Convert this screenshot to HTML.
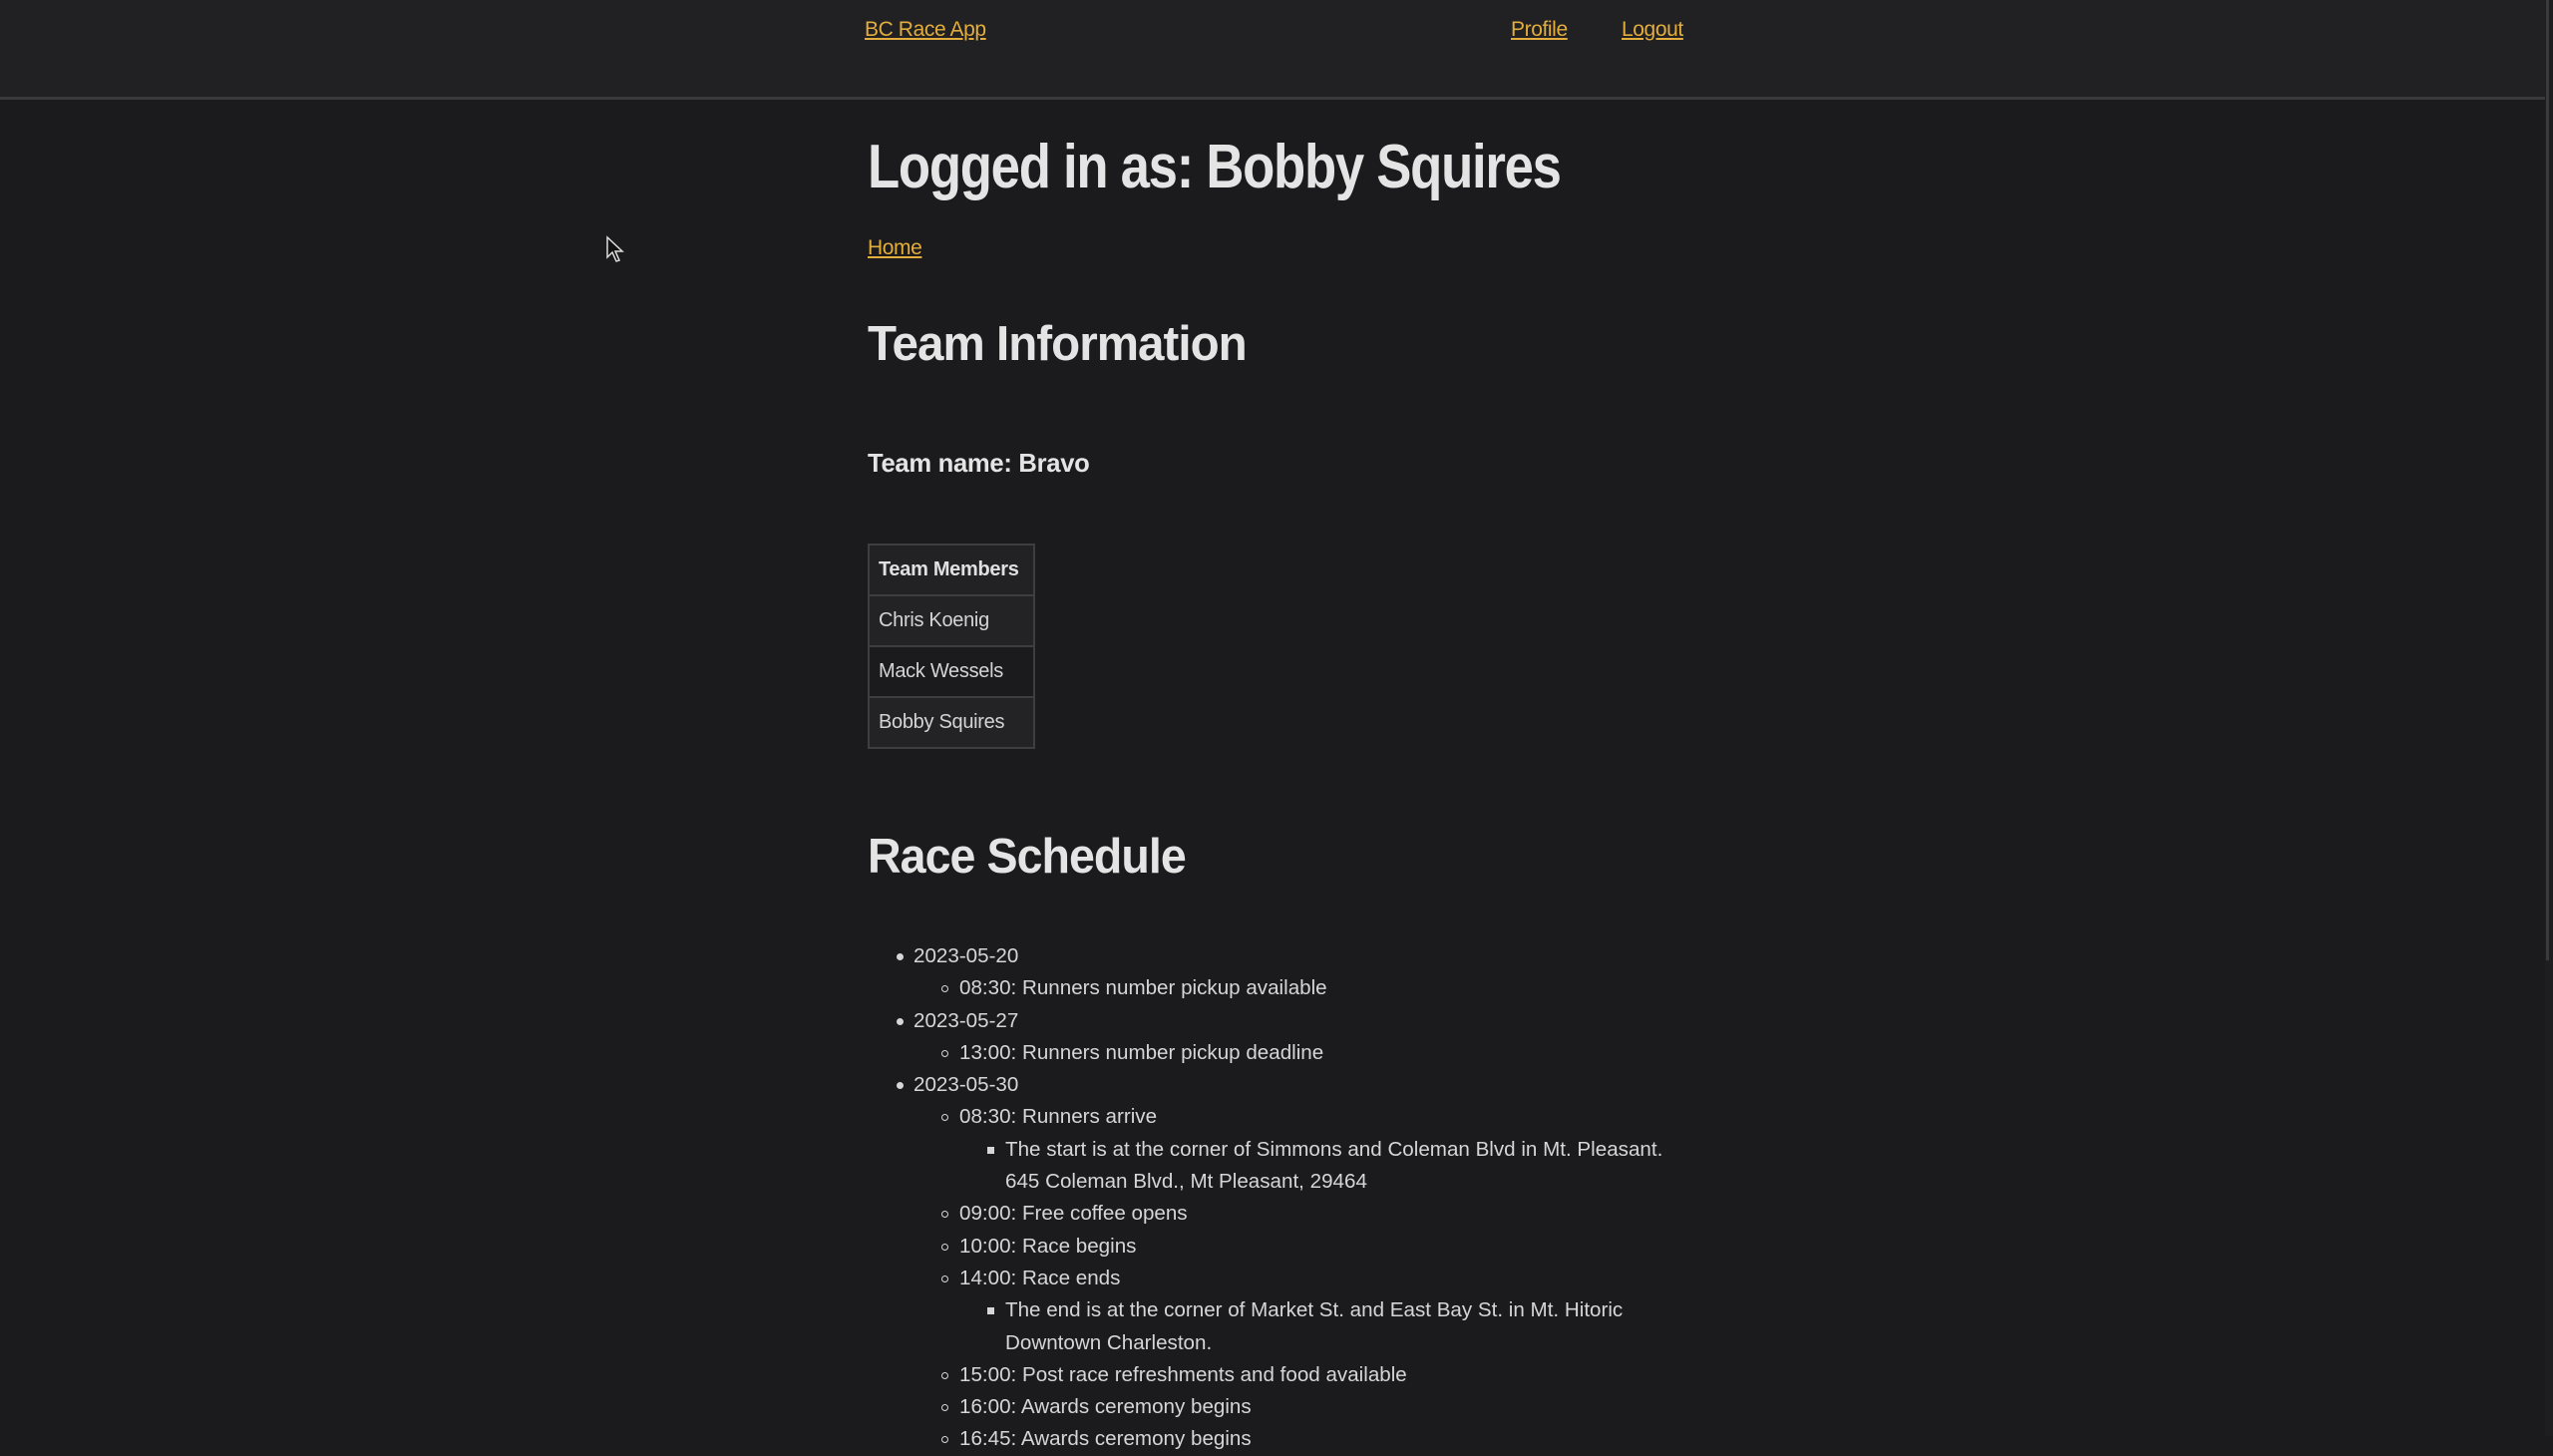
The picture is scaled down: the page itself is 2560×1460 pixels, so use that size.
<!DOCTYPE html>
<html><head><meta charset="utf-8">
<style>
html,body{margin:0;padding:0;}
body{width:2560px;height:1440px;overflow:hidden;background:#1b1b1d;font-family:"Liberation Sans",Arial,sans-serif;color:#d4d4d4;position:relative;}
.hdr{position:absolute;left:0;top:0;width:2552px;height:97px;background:#212124;border-bottom:3px solid #3a3a3d;}
a{color:#e2ad3c;text-decoration:underline;}
.nav{position:absolute;top:18px;font-size:21px;letter-spacing:-0.4px;}
.sb{position:absolute;left:2552px;top:0;width:8px;height:1440px;background:#1e1e20;}
.sbt{position:absolute;left:2553px;top:0;width:3px;height:963px;background:#3a3a3d;}
.c{position:absolute;left:870px;}
h1,h2,h3{margin:0;color:#e4e4e4;font-weight:bold;transform-origin:0 0;white-space:nowrap;}
h1{font-size:60px;letter-spacing:-1.5px;line-height:1;transform:scaleX(0.85);}
h2{font-size:49px;letter-spacing:-1px;line-height:1;}
h3{font-size:26px;letter-spacing:-0.3px;line-height:1;}
table{border-collapse:collapse;font-size:20px;letter-spacing:-0.3px;}
td,th{border:2px solid #3e3e41;padding:0 9px;height:49px;text-align:left;width:146px;}
th{background:#222225;color:#e0e0e0;}
tr.a td{background:#232326;}
tr.b td{background:#1b1b1d;}
ul{margin:0;padding:0;list-style:none;font-size:20.6px;letter-spacing:0;line-height:32.3px;color:#d6d6d6;}
li{position:relative;}
li.l1{padding-left:46px;}
.l1:before{content:"";position:absolute;left:29px;top:13px;width:7px;height:7px;border-radius:50%;background:#d6d6d6;}
.l2{padding-left:92px;}
.l2:before{content:"";position:absolute;left:74px;top:13px;width:5px;height:5px;border-radius:50%;border:1.5px solid #d6d6d6;}
.l3{padding-left:138px;}
.l3:before{content:"";position:absolute;left:120px;top:13px;width:7px;height:7px;background:#d6d6d6;}
</style></head><body>
<div class="hdr">
<a class="nav" style="left:867px" href="#">BC Race App</a>
<a class="nav" style="left:1515px" href="#">Profile</a>
<a class="nav" style="left:1626px" href="#">Logout</a>
</div>
<div class="sb"></div><div class="sbt"></div>
<svg style="position:absolute;left:607px;top:236px" width="20" height="28" viewBox="0 0 20 28"><path d="M2 2 L2 22 L7 17 L11 26 L14 25 L10 16 L17 16 Z" fill="#111" stroke="#ddd" stroke-width="1.5"/></svg>
<h1 class="c" style="top:137px;font-size:62px">Logged in as: Bobby Squires</h1>
<a class="c" style="top:237px;font-size:21px;letter-spacing:-0.4px" href="#">Home</a>
<h2 class="c" style="top:321px;transform:scaleX(0.97)">Team Information</h2>
<h3 class="c" style="top:451px;transform:scaleX(0.985)">Team name: Bravo</h3>
<table class="c" style="top:545px">
<tr><th>Team Members</th></tr>
<tr class="a"><td>Chris Koenig</td></tr>
<tr class="b"><td>Mack Wessels</td></tr>
<tr class="a"><td>Bobby Squires</td></tr>
</table>
<h2 class="c" style="top:835px;transform:scaleX(0.95)">Race Schedule</h2>
<ul class="c" style="top:943px;left:870px;width:900px">
<li class="l1">2023-05-20</li>
<li class="l2">08:30: Runners number pickup available</li>
<li class="l1">2023-05-27</li>
<li class="l2">13:00: Runners number pickup deadline</li>
<li class="l1">2023-05-30</li>
<li class="l2">08:30: Runners arrive</li>
<li class="l3">The start is at the corner of Simmons and Coleman Blvd in Mt. Pleasant.<br>645 Coleman Blvd., Mt Pleasant, 29464</li>
<li class="l2">09:00: Free coffee opens</li>
<li class="l2">10:00: Race begins</li>
<li class="l2">14:00: Race ends</li>
<li class="l3">The end is at the corner of Market St. and East Bay St. in Mt. Hitoric<br>Downtown Charleston.</li>
<li class="l2">15:00: Post race refreshments and food available</li>
<li class="l2">16:00: Awards ceremony begins</li>
<li class="l2">16:45: Awards ceremony begins</li>
</ul>
</body></html>
